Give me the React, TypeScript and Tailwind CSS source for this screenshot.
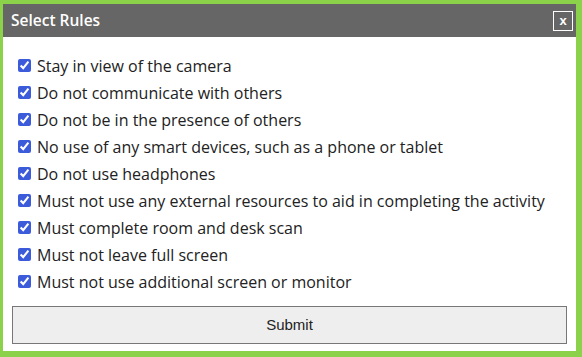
import { useState } from "react";

const rules = [
  "Stay in view of the camera",
  "Do not communicate with others",
  "Do not be in the presence of others",
  "No use of any smart devices, such as a phone or tablet",
  "Do not use headphones",
  "Must not use any external resources to aid in completing the activity",
  "Must complete room and desk scan",
  "Must not leave full screen",
  "Must not use additional screen or monitor",
];

export default function App() {
  const [checked, setChecked] = useState<boolean[]>(rules.map(() => true));

  return (
    <div className="w-[582px] h-[357px] bg-[#8bd14a] pt-[4px] pl-[3px] pr-[6px] pb-[6px]">
      <div className="w-full h-full bg-white flex flex-col">
        {/* header */}
        <div className="h-[33px] bg-[#666666] flex items-center justify-between pl-[8px] pr-[3px]">
          <span className="text-white text-[15.5px] font-semibold font-['Open_Sans',sans-serif]">Select Rules</span>
          <button className="w-[20px] h-[20px] border border-white text-white text-[13px] font-bold leading-none flex items-center justify-center font-['Liberation_Sans',sans-serif]">
            x
          </button>
        </div>

        {/* rules */}
        <div className="flex flex-col pt-[19px] pl-[15px] gap-[8px]">
          {rules.map((rule, i) => (
            <label key={rule} className="flex items-center gap-[6px] h-[19px] text-[16px] text-[#222] font-['Open_Sans',sans-serif]">
              <input
                type="checkbox"
                className="w-[13px] h-[13px] accent-[#3b5bdb] m-0"
                checked={checked[i]}
                onChange={() => setChecked(checked.map((c, j) => (j === i ? !c : c)))}
              />
              {rule}
            </label>
          ))}
        </div>

        <div className="px-[9px] pt-[15px]">
          <button className="w-full h-[38px] bg-[#eeeeee] border border-[#777] text-[15px] text-[#222] font-['Liberation_Sans',sans-serif]">
            Submit
          </button>
        </div>
      </div>
    </div>
  );
}
